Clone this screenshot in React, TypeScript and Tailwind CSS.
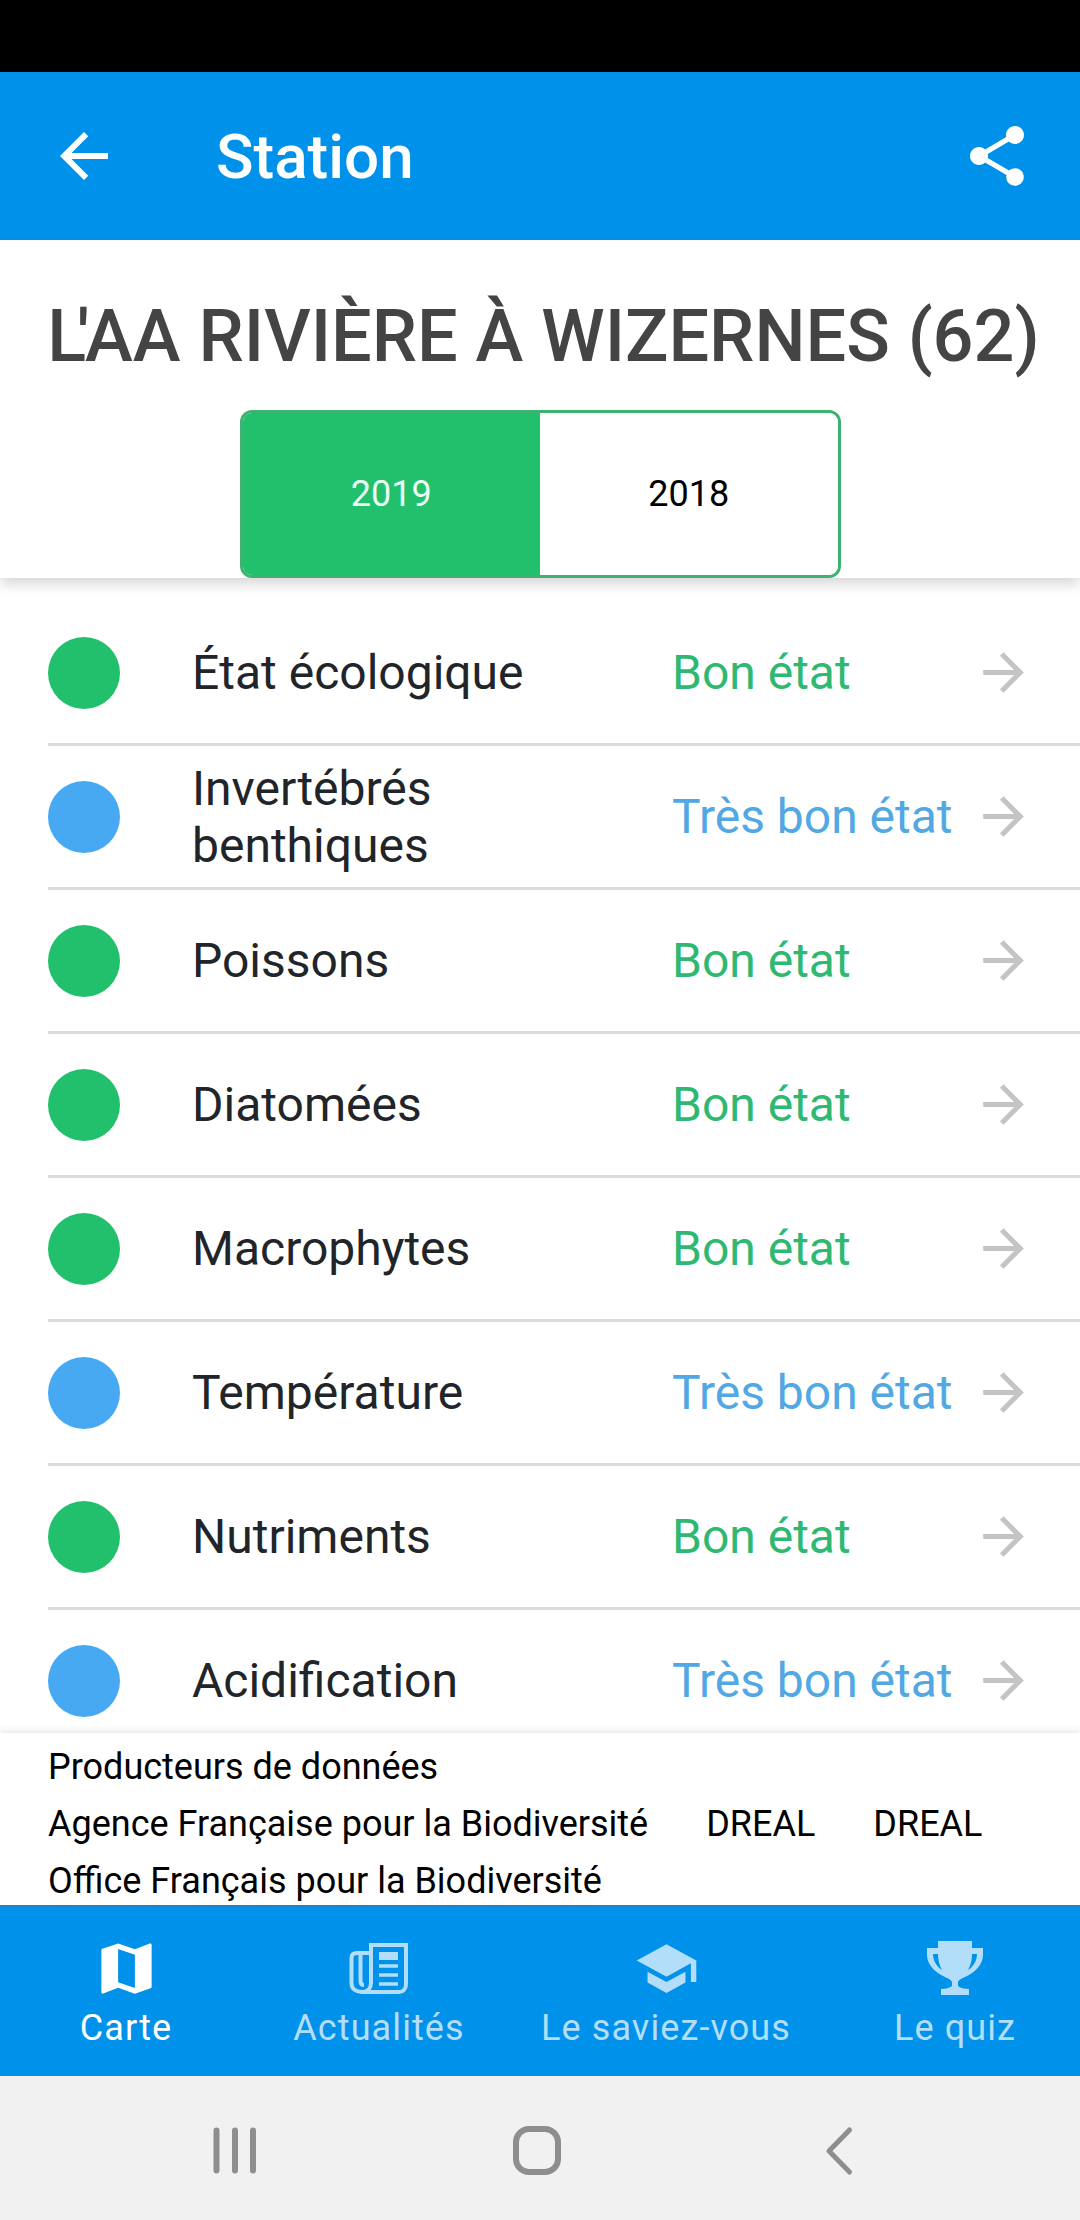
import { MdArrowBack, MdArrowForward, MdMap, MdSchool, MdShare } from 'react-icons/md';

const rows = [
  { label: 'État écologique', status: 'Bon état', good: true },
  { label: 'Invertébrés benthiques', status: 'Très bon état', good: false },
  { label: 'Poissons', status: 'Bon état', good: true },
  { label: 'Diatomées', status: 'Bon état', good: true },
  { label: 'Macrophytes', status: 'Bon état', good: true },
  { label: 'Température', status: 'Très bon état', good: false },
  { label: 'Nutriments', status: 'Bon état', good: true },
  { label: 'Acidification', status: 'Très bon état', good: false },
];

function NewspaperIcon() {
  return (
    <svg viewBox="0 0 70 62" className="w-[70px] h-[62px]" fill="none" stroke="currentColor" strokeWidth="4">
      <path d="M27 46V8H62V47C62 52 59 55 55 55H18C12 55 7.5 52 7.5 46V21C7.5 18 9 16 13 16H27" />
      <path d="M27 46C27 51 24 55 18 55" />
      <path d="M16.5 16V44C16.5 47 18 48 20 48" />
      <path d="M35 19H54" strokeWidth="8" />
      <path d="M35 29H54M35 38H54M35 47H54" strokeWidth="3.5" />
    </svg>
  );
}

function TrophyIcon() {
  return (
    <svg viewBox="0 0 70 66" className="w-[70px] h-[66px]" fill="currentColor">
      <path
        fillRule="evenodd"
        d="M18 6H52V13H63V20C63 29 56 37 45 42C41 44 38 45 38 48V50C38 52 41 53.5 49 54V60H21V54C29 53.5 32 52 32 50V48C32 45 29 44 25 42C14 37 7 29 7 20V13H18ZM13 19H18C18 24 19 30 22 35C16 31 13 25 13 19ZM57 19H52C52 24 51 30 48 35C54 31 57 25 57 19Z"
      />
    </svg>
  );
}

function StationRow({ label, status, good }: { label: string; status: string; good: boolean }) {
  return (
    <div className="flex items-center h-[144px] shrink-0 ml-[48px] border-b-[3px] border-[#dcdcdc]">
      <div className={`w-[72px] h-[72px] rounded-full shrink-0 ${good ? 'bg-[#22c06c]' : 'bg-[#48a9f3]'}`} />
      <div className="w-[552px] pl-[72px] pr-[100px] shrink-0 text-[48px] leading-[57px] text-[#212529]">{label}</div>
      <div className={`w-[300px] shrink-0 text-[48px] ${good ? 'text-[#2fb872]' : 'text-[#52a8e2]'}`}>{status}</div>
      <MdArrowForward className="w-[61px] h-[61px] text-[#c4c4c4] ml-[1px] shrink-0" />
    </div>
  );
}

function Tab({ label, active, icon }: { label: string; active?: boolean; icon: React.ReactNode }) {
  return (
    <div className={`flex flex-col items-center ${active ? 'text-white' : 'text-[#b3def9]'}`}>
      <div className="h-[70px] flex items-center justify-center">{icon}</div>
      <div className="text-[36px] leading-[44px] tracking-[1.1px] mt-[3px] whitespace-nowrap">{label}</div>
    </div>
  );
}

export default function App() {
  return (
    <div className="w-[1080px] h-[2220px] flex flex-col overflow-hidden bg-white font-['Roboto',sans-serif]">
      <div className="h-[72px] bg-black shrink-0" />

      <div className="h-[168px] bg-[#0091ea] flex items-center justify-between pl-[48px] pr-[47px] text-white shrink-0">
        <div className="flex items-center">
          <MdArrowBack className="w-[72px] h-[72px]" />
          <span className="ml-[96px] text-[62px] font-medium">Station</span>
        </div>
        <MdShare className="w-[72px] h-[72px]" />
      </div>

      <div className="relative z-10 flex flex-col items-center h-[338px] shrink-0 bg-white shadow-[0_6px_12px_rgba(0,0,0,0.16)]">
        <h1 className="pt-[54px] pl-[7px] text-[72px] leading-[86px] font-medium text-[#444444] whitespace-nowrap">
          <span className="tracking-[-9px]">L</span>'AA RIVIÈRE À WIZERNES (62)
        </h1>
        <div className="mt-[30px] w-[601px] h-[168px] flex rounded-[12px] border-[3px] border-[#3cb371] overflow-hidden text-[36px]">
          <div className="flex-1 flex items-center justify-center bg-[#22c06c] text-[#e8fff3]">2019</div>
          <div className="flex-1 flex items-center justify-center bg-white text-black">2018</div>
        </div>
      </div>

      <div className="flex-1 min-h-0 overflow-hidden pt-[24px] flex flex-col">
        {rows.map((row) => (
          <StationRow key={row.label} {...row} />
        ))}
      </div>

      <div className="relative z-10 h-[172px] shrink-0 overflow-hidden bg-white pt-[6px] pl-[48px] text-[36px] leading-[57px] text-black shadow-[0_-3px_5px_rgba(0,0,0,0.08)]">
        <div>Producteurs de données</div>
        <div className="flex flex-wrap">
          <span className="mr-[58px]">Agence Française pour la Biodiversité</span>
          <span className="mr-[58px]">DREAL</span>
          <span className="mr-[58px]">DREAL</span>
          <span className="mr-[58px]">Office Français pour la Biodiversité</span>
        </div>
      </div>

      <div className="h-[171px] shrink-0 bg-[#0091ea] border-t-[2px] border-[#1a85c8] grid grid-cols-[252px_254px_320px_258px] pt-[26px]">
        <Tab label="Carte" active icon={<MdMap className="w-[67px] h-[67px]" />} />
        <Tab label="Actualités" icon={<NewspaperIcon />} />
        <Tab label="Le saviez-vous" icon={<MdSchool className="w-[65px] h-[65px]" />} />
        <Tab label="Le quiz" icon={<TrophyIcon />} />
      </div>

      <div className="h-[144px] shrink-0 bg-[#f1f1f1] flex items-center">
        <svg viewBox="0 0 1080 144" className="w-[1080px] h-[144px]" fill="none" stroke="#8e8e8e" strokeLinecap="round" strokeLinejoin="round">
          <path d="M216.5 54.5V94.5M235 54.5V94.5M253 54.5V94.5" strokeWidth="6" />
          <rect x="516" y="53" width="42" height="43" rx="13" strokeWidth="6" />
          <path d="M849.5 54L829 75L849.5 96" strokeWidth="5" />
        </svg>
      </div>
    </div>
  );
}
